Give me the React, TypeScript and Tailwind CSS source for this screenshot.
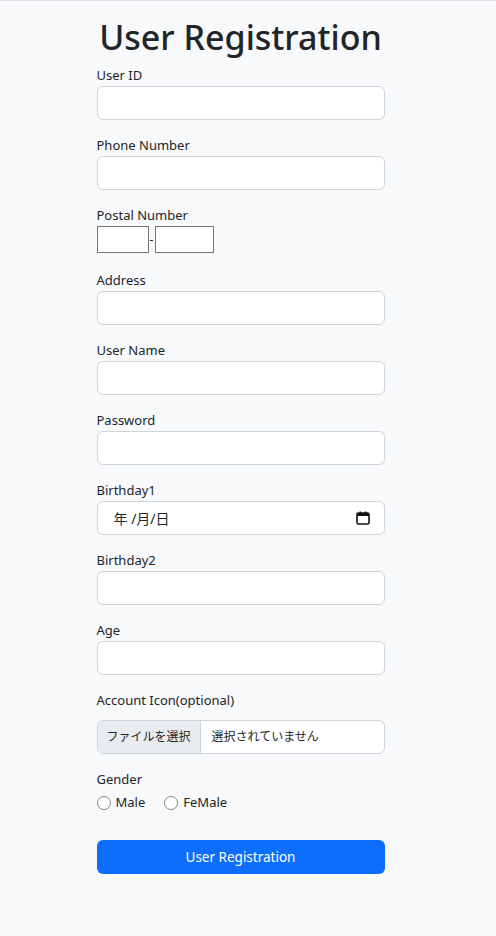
import React from 'react';

const font = { fontFamily: '"Noto Sans", "Noto Sans CJK JP", sans-serif' };

function Field({ label, children }: { label: string; children?: React.ReactNode }) {
  return (
    <div className="mb-[15px]">
      <label className="block text-[13px] leading-[21px] text-[#212529]">{label}</label>
      {children ?? <div className="h-[34px] w-full rounded-[6px] border border-[#ced4da] bg-white" />}
    </div>
  );
}

export default function App() {
  return (
    <div className="min-h-[936px] border-t border-[#dee2e6] bg-[#f8f9fa] pr-[15px]" style={font}>
      <div className="mx-auto w-[288px] pb-10">
        <h1 className="mt-[14px] mb-[6px] whitespace-nowrap text-center text-[34px] font-medium leading-[44px] text-[#212529]">
          User Registration
        </h1>

        <Field label="User ID" />
        <Field label="Phone Number" />

        <div className="mb-[17px]">
          <label className="block text-[13px] leading-[21px] text-[#212529]">Postal Number</label>
          <div className="flex items-center">
            <div className="h-[27px] w-[52px] border border-[#767676] bg-white" />
            <span className="w-[6px] text-center text-[12px] leading-none text-[#212529]">-</span>
            <div className="h-[27px] w-[59px] border border-[#767676] bg-white" />
          </div>
        </div>

        <Field label="Address" />
        <Field label="User Name" />
        <Field label="Password" />

        <Field label="Birthday1">
          <div className="flex h-[34px] w-full items-center justify-between rounded-[6px] border border-[#ced4da] bg-white pl-[16px] pr-[14px]">
            <span className="text-[14px] text-[#212529]">年 /月/日</span>
            <svg width="14" height="14" viewBox="0 0 14 14">
              <rect x="1" y="2" width="12" height="11" rx="1.5" fill="none" stroke="#111" strokeWidth="1.6" />
              <rect x="1" y="2" width="12" height="3" fill="#111" />
              <rect x="3.5" y="0.5" width="1.5" height="2.5" fill="#111" />
              <rect x="9" y="0.5" width="1.5" height="2.5" fill="#111" />
            </svg>
          </div>
        </Field>

        <Field label="Birthday2" />
        <Field label="Age" />

        <div className="mb-[15px]">
          <label className="block text-[13px] leading-[21px] text-[#212529]">Account Icon(optional)</label>
          <div className="mt-[9px] flex h-[34px] w-full overflow-hidden rounded-[6px] border border-[#ced4da] bg-white text-[12px] text-[#212529]">
            <div className="flex w-[103px] items-center justify-center border-r border-[#ced4da] bg-[#e9ecef]">ファイルを選択</div>
            <div className="flex items-center pl-[11px]">選択されていません</div>
          </div>
        </div>

        <div className="mt-[14px]">
          <label className="block text-[13px] leading-[21px] text-[#212529]">Gender</label>
          <div className="mt-[2px] flex items-center text-[13px] leading-[21px] text-[#212529]">
            <span className="mr-[5px] inline-block h-[14px] w-[14px] rounded-full border border-[#858585] bg-white" />
            <span>Male</span>
            <span className="ml-[19px] mr-[5px] inline-block h-[14px] w-[14px] rounded-full border border-[#858585] bg-white" />
            <span>FeMale</span>
          </div>
        </div>

        <button className="mt-[27px] h-[34px] w-full rounded-[6px] bg-[#0d6efd] text-[13.5px] text-white">
          User Registration
        </button>
      </div>
    </div>
  );
}
